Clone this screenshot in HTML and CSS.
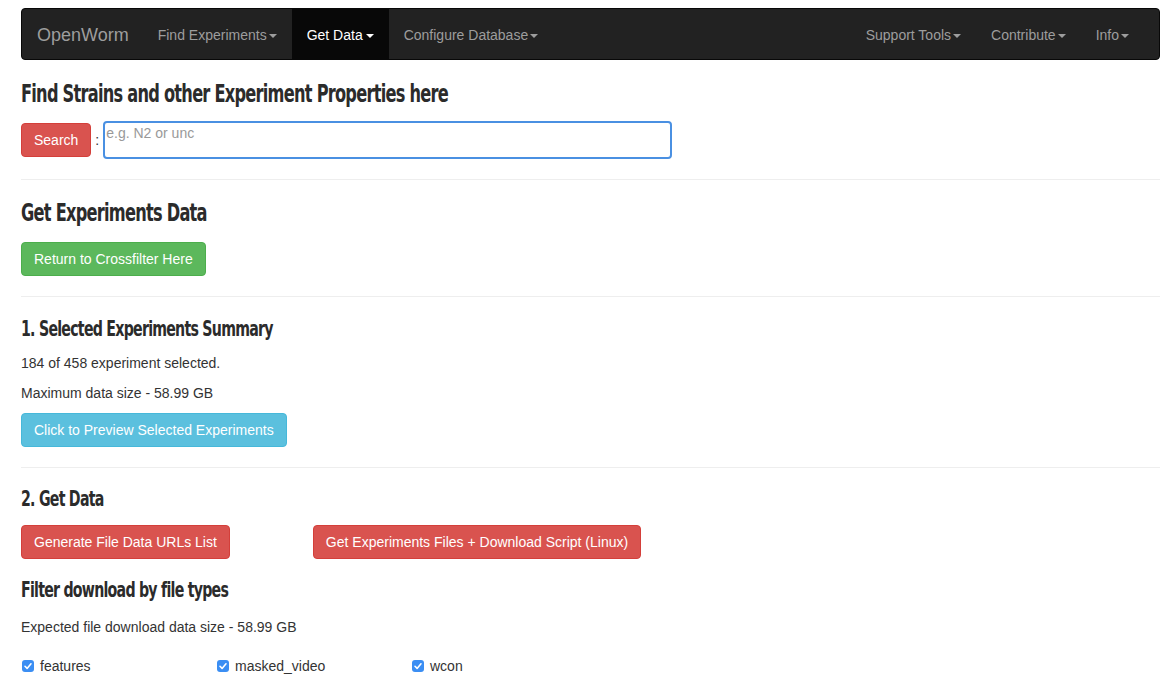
FILE: index.html
```html
<!DOCTYPE html>
<html>
<head>
<meta charset="utf-8">
<link rel="stylesheet" href="styles.css">
</head>
<body>
<div class="page">
  <nav class="navbar">
    <a class="brand">OpenWorm</a>
    <ul class="nav">
      <li><a>Find Experiments<span class="caret"></span></a></li>
      <li class="active"><a>Get Data<span class="caret"></span></a></li>
      <li><a>Configure Database<span class="caret"></span></a></li>
    </ul>
    <ul class="nav nav-right">
      <li><a>Support Tools<span class="caret"></span></a></li>
      <li><a>Contribute<span class="caret"></span></a></li>
      <li><a>Info<span class="caret"></span></a></li>
    </ul>
  </nav>

  <h1 class="title t1"><span class="cond">Find Strains and other Experiment Properties here</span></h1>
  <div class="search-row">
    <button class="btn btn-danger">Search</button>
    <span class="colon">:</span>
    <div class="input"><span class="placeholder">e.g. N2 or unc</span></div>
  </div>
  <hr class="rule r1">

  <h2 class="title t2"><span class="cond">Get Experiments Data</span></h2>
  <button class="btn btn-success b2">Return to Crossfilter Here</button>
  <hr class="rule r2">

  <h3 class="title t3"><span class="cond">1. Selected Experiments Summary</span></h3>
  <p class="txt p1">184 of 458 experiment selected.</p>
  <p class="txt p2">Maximum data size - 58.99 GB</p>
  <button class="btn btn-info b3">Click to Preview Selected Experiments</button>
  <hr class="rule r3">

  <h3 class="title t4"><span class="cond">2. Get Data</span></h3>
  <div class="btn-row">
    <button class="btn btn-danger">Generate File Data URLs List</button>
    <button class="btn btn-danger second">Get Experiments Files + Download Script (Linux)</button>
  </div>

  <h3 class="title t5"><span class="cond">Filter download by file types</span></h3>
  <p class="txt p3">Expected file download data size - 58.99 GB</p>
  <div class="checks">
    <label class="check"><span class="box"><svg viewBox="0 0 12 12" width="12" height="12"><path d="M3 6.3 L5.1 8.4 L9 3.8" fill="none" stroke="#fff" stroke-width="1.6" stroke-linecap="round" stroke-linejoin="round"/></svg></span>features</label>
    <label class="check"><span class="box"><svg viewBox="0 0 12 12" width="12" height="12"><path d="M3 6.3 L5.1 8.4 L9 3.8" fill="none" stroke="#fff" stroke-width="1.6" stroke-linecap="round" stroke-linejoin="round"/></svg></span>masked_video</label>
    <label class="check"><span class="box"><svg viewBox="0 0 12 12" width="12" height="12"><path d="M3 6.3 L5.1 8.4 L9 3.8" fill="none" stroke="#fff" stroke-width="1.6" stroke-linecap="round" stroke-linejoin="round"/></svg></span>wcon</label>
  </div>
</div>
</body>
</html>
```

FILE: styles.css
```css
* { box-sizing: border-box; }
html, body { margin: 0; padding: 0; background: #fff; }
body {
  font-family: "Liberation Sans", Arial, sans-serif;
  font-size: 14px;
  line-height: 20px;
  color: #333;
  overflow: hidden;
}
.page {
  padding: 8px 13px 0 21px;
}
.navbar {
  display: flex;
  align-items: stretch;
  height: 52px;
  background: #222;
  border: 1px solid #080808;
  border-radius: 4px;
}
.brand {
  padding: 16px 14px 14px 15px;
  font-size: 18px;
  line-height: 20px;
  color: #9d9d9d;
}
.nav {
  display: flex;
  list-style: none;
  margin: 0;
  padding: 0;
}
.nav li a {
  display: block;
  padding: 16px 15px 14px;
  line-height: 20px;
  color: #9d9d9d;
}
.nav li.active a {
  background: #080808;
  color: #fff;
}
.nav li.active .caret { margin-left: 3px; }
.nav-right {
  margin-left: auto;
  padding-right: 15px;
}
.caret {
  display: inline-block;
  width: 0;
  height: 0;
  margin-left: 2px;
  vertical-align: middle;
  border-top: 4px solid;
  border-right: 4px solid transparent;
  border-left: 4px solid transparent;
}
.title {
  font-family: "DejaVu Sans Condensed", "DejaVu Sans", sans-serif;
  font-weight: bold;
  color: #2b2b2b;
  margin: 0;
  letter-spacing: -1px;
  white-space: nowrap;
}
.cond {
  display: inline-block;
  transform: scaleX(0.75);
  transform-origin: 0 50%;
}
.t1, .t2 { font-size: 24px; line-height: 30px; }
.t3, .t4, .t5 { font-size: 21px; line-height: 26px; }
.t1 { margin-top: 19px; }
.search-row {
  display: flex;
  align-items: center;
  height: 38px;
  margin-top: 12px;
}
.colon { margin: 0 4px 0 4px; color: #333; }
.input {
  width: 569px;
  height: 38px;
  border: 2px solid #4a90e2;
  border-radius: 4px;
  padding: 0 1px;
}
.placeholder {
  color: #999;
  font-size: 14px;
  line-height: 20px;
}
.btn {
  display: inline-block;
  font-family: "Liberation Sans", Arial, sans-serif;
  font-size: 14px;
  line-height: 20px;
  padding: 6px 12px;
  height: 34px;
  border: 1px solid transparent;
  border-radius: 4px;
  color: #fff;
  margin: 0;
}
.btn-danger { background: #d9534f; border-color: #d43f3a; }
.btn-success { background: #5cb85c; border-color: #4cae4c; }
.btn-info { background: #5bc0de; border-color: #46b8da; }
.rule {
  border: 0;
  border-top: 1px solid #eee;
  margin: 0;
  height: 0;
}
.r1 { margin-top: 20px; }
.t2 { margin-top: 18px; }
.b2 { display: block; margin-top: 14px; }
.r2 { margin-top: 20px; }
.t3 { margin-top: 19px; }
.txt { margin: 0; }
.p1 { margin-top: 11px; }
.p2 { margin-top: 10px; }
.b3 { display: block; margin-top: 10px; }
.r3 { margin-top: 20px; }
.t4 { margin-top: 18px; }
.btn-row { display: flex; margin-top: 13px; }
.btn-row .second { margin-left: 83px; }
.t5 { margin-top: 18px; }
.p3 { margin-top: 14px; }
.checks {
  display: grid;
  grid-template-columns: 195px 195px 195px;
  margin-top: 19px;
}
.check {
  display: flex;
  align-items: center;
  height: 20px;
  padding-left: 1px;
}
.box {
  display: inline-flex;
  align-items: center;
  justify-content: center;
  width: 12px;
  height: 12px;
  background: #3b8ef3;
  border-radius: 3px;
  margin-right: 6px;
}
```
